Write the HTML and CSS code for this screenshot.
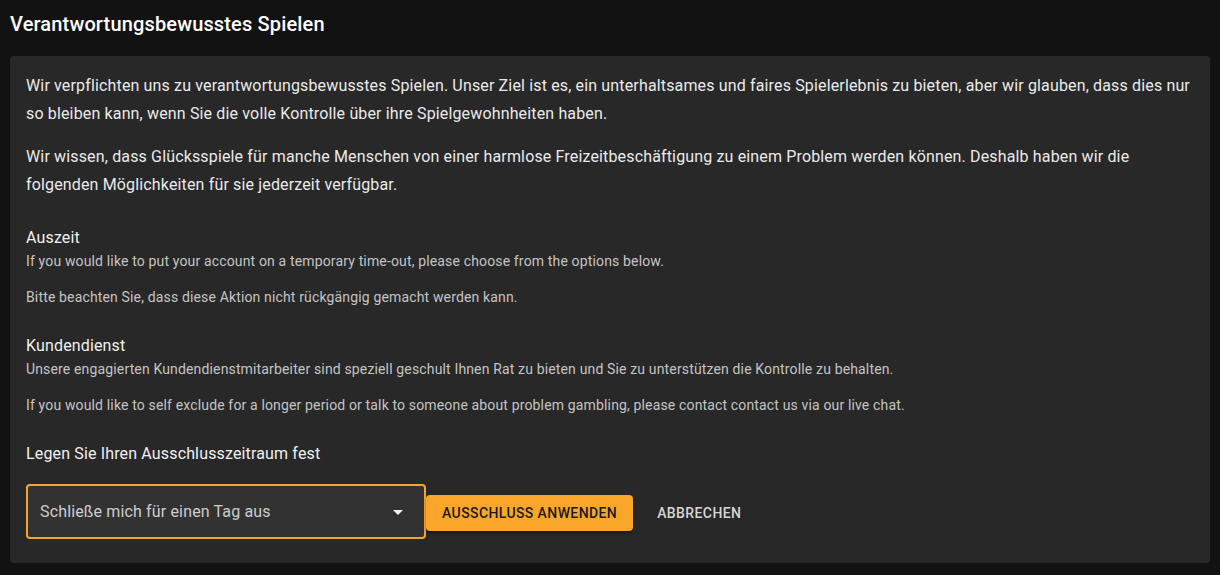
FILE: index.html
```html
<!DOCTYPE html>
<html>
<head>
  <title>Verantwortungsbewusstes Spielen</title>
  <link rel="stylesheet" href="styles.css">
</head>
<body>
  <h1 class="page-title">Verantwortungsbewusstes Spielen</h1>

  <div class="card">
    <p class="lead">Wir verpflichten uns zu verantwortungsbewusstes Spielen. Unser Ziel ist es, ein unterhaltsames und faires Spielerlebnis zu bieten, aber wir glauben, dass dies nur so bleiben kann, wenn Sie die volle Kontrolle über ihre Spielgewohnheiten haben.</p>
    <p class="lead">Wir wissen, dass Glücksspiele für manche Menschen von einer harmlose Freizeitbeschäftigung zu einem Problem werden können. Deshalb haben wir die folgenden Möglichkeiten für sie jederzeit verfügbar.</p>

    <div class="section">
      <h3>Auszeit</h3>
      <p class="small">If you would like to put your account on a temporary time-out, please choose from the options below.</p>
      <p class="small">Bitte beachten Sie, dass diese Aktion nicht rückgängig gemacht werden kann.</p>
    </div>

    <div class="section">
      <h3>Kundendienst</h3>
      <p class="small">Unsere engagierten Kundendienstmitarbeiter sind speziell geschult Ihnen Rat zu bieten und Sie zu unterstützen die Kontrolle zu behalten.</p>
      <p class="small">If you would like to self exclude for a longer period or talk to someone about problem gambling, please contact contact us via our live chat.</p>
    </div>

    <h3 class="period-label">Legen Sie Ihren Ausschlusszeitraum fest</h3>

    <div class="actions">
      <div class="select">
        <span>Schließe mich für einen Tag aus</span>
        <svg width="24" height="24" viewBox="0 0 24 24"><path d="M7 10l5 5 5-5z" fill="#f2f2f2"/></svg>
      </div>
      <button class="btn-primary">Ausschluss anwenden</button>
      <button class="btn-text">Abbrechen</button>
    </div>
  </div>
</body>
</html>
```

FILE: styles.css
```css
body { margin: 0; padding: 0 10px; background: #121212; font-family: Roboto, "Noto Sans", sans-serif; color: #e6e6e6; }
.page-title { margin: 0; padding: 8px 0 16px; font-size: 20px; font-weight: 500; line-height: 32px; letter-spacing: 0.15px; color: #fff; }
.card { background: #282828; border-radius: 4px; padding: 16px 16px 24px; }
.lead { margin: 0 0 15px; font-size: 16px; line-height: 28px; letter-spacing: 0.15px; color: #eaeaea; }
.lead + .lead { margin-bottom: 16px; }
.section { margin-top: 27px; }
.section + .section { margin-top: 25px; }
.section h3, .period-label { margin: 0; font-size: 16px; font-weight: 400; line-height: 24px; letter-spacing: 0.15px; color: #f0f0f0; }
.small { margin: 0 0 12px; font-size: 14px; line-height: 24px; letter-spacing: 0.15px; color: #c4c4c4; }
.section .small:first-of-type { margin-top: -1px; }
.period-label { margin-top: 25px; }
.actions { display: flex; align-items: center; margin-top: 18px; }
.select { box-sizing: border-box; width: 400px; height: 55px; display: flex; align-items: center; justify-content: space-between; padding: 0 14px 0 12px; background: #323232; border: 2px solid #f5a52c; border-radius: 4px; font-size: 16px; letter-spacing: 0.15px; color: #cdcdcd; }
.btn-primary { margin-top: 3px; height: 36px; padding: 0 16px; background: #f9a62b; color: #1a1a1a; border: none; border-radius: 4px; font-family: inherit; font-size: 14px; font-weight: 500; text-transform: uppercase; letter-spacing: 0.4px; box-shadow: 0 2px 3px rgba(0,0,0,0.4); cursor: pointer; }
.btn-text { margin: 3px 0 0 8px; height: 36px; padding: 0 16px; background: none; border: none; color: #d6d6d6; font-family: inherit; font-size: 14px; font-weight: 500; text-transform: uppercase; letter-spacing: 0.4px; cursor: pointer; }
```
